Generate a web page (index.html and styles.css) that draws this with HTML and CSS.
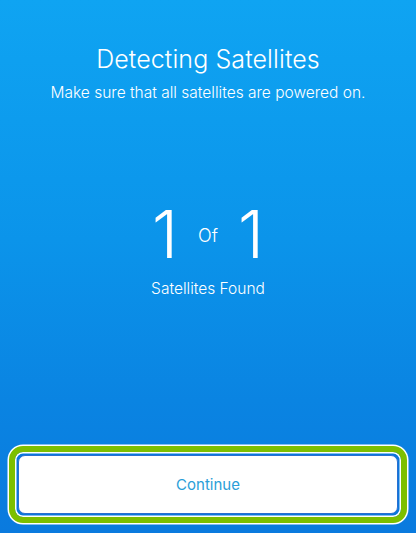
FILE: index.html
```html
<!DOCTYPE html>
<html>
<head>
<meta charset="utf-8">
<link rel="stylesheet" href="styles.css">
</head>
<body>
<div class="screen">
  <div class="header">
    <div class="title">Detecting Satellites</div>
    <div class="subtitle">Make sure that all satellites are powered on.</div>
  </div>
  <div class="count">
    <span class="num">1</span>
    <span class="of">Of</span>
    <span class="num">1</span>
  </div>
  <div class="found">Satellites Found</div>
  <div class="footer">
    <div class="focus">
      <div class="button">Continue</div>
    </div>
  </div>
</div>
</body>
</html>
```

FILE: styles.css
```css
html, body {
  margin: 0;
  padding: 0;
}
body {
  font-family: Inter, "Noto Sans", sans-serif;
  color: #fff;
}
.screen {
  height: 533px;
  display: flex;
  flex-direction: column;
  background: linear-gradient(to bottom, #0fa4f2 0%, #0b94ea 45%, #0a84e2 75%, #0a7ade 100%);
}
.header {
  padding-top: 43px;
  text-align: center;
}
.title {
  font-size: 25px;
  font-weight: 300;
  line-height: 32px;
  letter-spacing: 0.1px;
}
.subtitle {
  margin-top: 8px;
  font-size: 15.5px;
  font-weight: 300;
  line-height: 20px;
}
.count {
  margin-top: 98px;
  display: flex;
  justify-content: center;
  align-items: center;
  gap: 20px;
  height: 66px;
}
.num {
  font-size: 66px;
  font-weight: 300;
  line-height: 66px;
}
.of {
  font-size: 18px;
  font-weight: 300;
  margin-top: 2px;
}
.found {
  margin-top: 12px;
  text-align: center;
  font-size: 15.5px;
  font-weight: 300;
  line-height: 20px;
}
.footer {
  margin-top: auto;
  padding: 0 9px 10px;
}
.focus {
  border: 6px solid #7dbf00;
  border-radius: 14px;
  box-shadow: 0 0 0 1.5px #ffffff, inset 0 0 0 1.5px #ffffff;
  padding: 3px;
  background: #0a78dc;
}
.button {
  height: 57px;
  background: #fff;
  border: 1px solid #2a6fd2;
  border-radius: 7px;
  display: flex;
  align-items: center;
  justify-content: center;
  color: #2a9ed8;
  font-size: 15px;
  font-weight: 400;
}
```
